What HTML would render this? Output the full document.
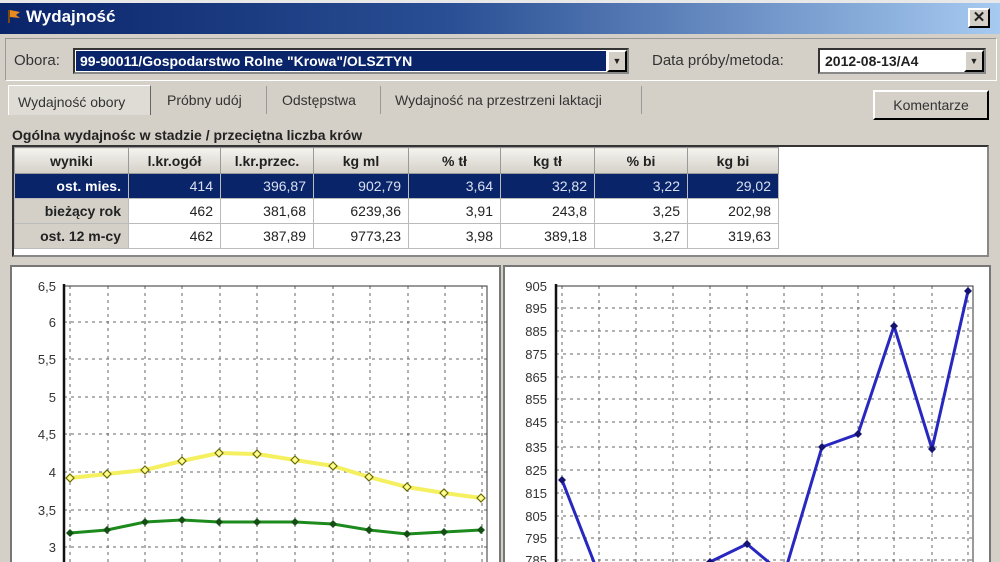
<!DOCTYPE html>
<html><head><meta charset="utf-8">
<style>
*{margin:0;padding:0;box-sizing:border-box}
body{width:1000px;height:562px;overflow:hidden;background:#d4d0c8;font-family:"Liberation Sans",sans-serif;font-size:13px;color:#222;position:relative}
.a{position:absolute}
.title{left:0;top:0;width:1000px;height:34px;background:linear-gradient(90deg,#0a246a 0%,#2a4f94 45%,#a6caf0 100%);border-top:3px solid #e8e8e8}
.combo{background:#fff;border:2px inset #888}
.btn{background:#d4d0c8;border:2px outset #fff;border-right-color:#555;border-bottom-color:#555}
table{border-collapse:collapse;font-size:14px}
td{height:25px;border:1px solid #bbb;padding:0 7px;text-align:right}
th{height:26px;background:linear-gradient(#f4f3ee,#d4d0c8);border:1px solid #999;font-weight:bold;text-align:center}
td.h{background:#d4d0c8;font-weight:bold}
tr.sel td{background:#0a246a;color:#d8e0f0}
tr.sel td.h{font-weight:bold;color:#fff}
</style></head><body>
<div class="a title"></div>
<div class="a" style="left:6px;top:8px;width:16px;height:16px"><svg width="16" height="16"><path d="M3 2 L3 15" stroke="#7a4a10" stroke-width="2"/><path d="M4 2 L14 4 L10 7 L14 10 L4 9Z" fill="#e88a20"/></svg></div>
<div class="a" style="left:26px;top:7px;color:#fff;font-weight:bold;font-size:17px">Wydajność</div>
<div class="a btn" style="left:968px;top:8px;width:22px;height:20px;font-weight:bold;font-size:15px;line-height:15px;text-align:center">✕</div>

<div class="a" style="left:5px;top:38px;width:992px;height:43px;border:1px solid #fff;border-top-color:#999;border-left-color:#999"></div>
<div class="a" style="left:14px;top:52px;font-size:15px;color:#333">Obora:</div>
<div class="a combo" style="left:73px;top:48px;width:556px;height:26px"><div style="position:absolute;left:1px;top:1px;width:530px;height:20px;background:#0a246a;color:#fff;font-weight:bold;font-size:14px;padding-left:4px;line-height:20px">99-90011/Gospodarstwo Rolne "Krowa"/OLSZTYN</div><div class="btn" style="position:absolute;right:0;top:0;width:20px;height:22px;font-size:9px;text-align:center;line-height:18px">▼</div></div>
<div class="a" style="left:652px;top:52px;font-size:15px;color:#333">Data próby/metoda:</div>
<div class="a combo" style="left:818px;top:48px;width:168px;height:26px"><div style="position:absolute;left:5px;top:3px;font-weight:bold;font-size:14px">2012-08-13/A4</div><div class="btn" style="position:absolute;right:0;top:0;width:20px;height:22px;font-size:9px;text-align:center;line-height:18px">▼</div></div>

<div class="a" style="left:8px;top:85px;width:143px;height:30px;background:#dfdcd5;border:1px solid #fff;border-right-color:#666;border-bottom:none;font-size:14px;padding:8px 0 0 9px;color:#333">Wydajność obory</div>
<div class="a" style="left:167px;top:92px;font-size:14px;color:#333">Próbny udój</div>
<div class="a" style="left:266px;top:86px;height:28px;border-left:1px solid #999"></div>
<div class="a" style="left:282px;top:92px;font-size:14px;color:#333">Odstępstwa</div>
<div class="a" style="left:380px;top:86px;height:28px;border-left:1px solid #999"></div>
<div class="a" style="left:395px;top:92px;font-size:14px;color:#333">Wydajność na przestrzeni laktacji</div>
<div class="a" style="left:641px;top:86px;height:28px;border-left:1px solid #999"></div>
<div class="a btn" style="left:873px;top:90px;width:116px;height:30px;font-size:14px;text-align:center;line-height:26px;color:#333">Komentarze</div>

<div class="a" style="left:12px;top:127px;font-weight:bold;font-size:14px">Ogólna wydajnośc w stadzie / przeciętna liczba krów</div>
<div class="a" style="left:12px;top:145px;width:977px;height:112px;background:#fff;border:2px inset #888"></div>
<table class="a" style="left:14px;top:147px">
<tr><th style="width:114px">wyniki</th><th style="width:92px">l.kr.ogół</th><th style="width:93px">l.kr.przec.</th><th style="width:95px">kg ml</th><th style="width:92px">% tł</th><th style="width:94px">kg tł</th><th style="width:93px">% bi</th><th style="width:91px">kg bi</th></tr>
<tr class="sel"><td class="h">ost. mies.</td><td>414</td><td>396,87</td><td>902,79</td><td>3,64</td><td>32,82</td><td>3,22</td><td>29,02</td></tr>
<tr><td class="h">bieżący rok</td><td>462</td><td>381,68</td><td>6239,36</td><td>3,91</td><td>243,8</td><td>3,25</td><td>202,98</td></tr>
<tr><td class="h">ost. 12 m-cy</td><td>462</td><td>387,89</td><td>9773,23</td><td>3,98</td><td>389,18</td><td>3,27</td><td>319,63</td></tr>
</table>

<svg class="a" style="left:0;top:0" width="1000" height="562" font-family="Liberation Sans,sans-serif" font-size="13" fill="#333">
<rect x="11" y="266" width="489" height="300" fill="#fff" stroke="#777" stroke-width="2"/>
<rect x="504" y="266" width="486" height="300" fill="#fff" stroke="#777" stroke-width="2"/>
<g stroke="#666" stroke-dasharray="3,4" stroke-width="1">
<path d="M64 322H487M64 359H487M64 397H487M64 434H487M64 472H487M64 510H487M64 547H487"/>
<path d="M70 286V562M108 286V562M145 286V562M182 286V562M220 286V562M257 286V562M295 286V562M333 286V562M370 286V562M408 286V562M445 286V562M482 286V562"/>
<path d="M556 308H973M556 331H973M556 354H973M556 377H973M556 399H973M556 422H973M556 447H973M556 470H973M556 493H973M556 516H973M556 538H973M556 560H973"/>
<path d="M562 286V562M599 286V562M636 286V562M673 286V562M710 286V562M747 286V562M784 286V562M822 286V562M858 286V562M894 286V562M932 286V562M968 286V562"/>
</g>
<path d="M64 286H487V562M556 286H973V562" stroke="#333" fill="none"/>
<path d="M64 284V562M556 284V562" stroke="#111" stroke-width="2.5"/>
<g text-anchor="end">
<text x="56" y="291">6,5</text><text x="56" y="327">6</text><text x="56" y="364">5,5</text><text x="56" y="402">5</text><text x="56" y="439">4,5</text><text x="56" y="477">4</text><text x="56" y="515">3,5</text><text x="56" y="552">3</text>
<text x="547" y="291">905</text><text x="547" y="313">895</text><text x="547" y="336">885</text><text x="547" y="359">875</text><text x="547" y="382">865</text><text x="547" y="404">855</text><text x="547" y="427">845</text><text x="547" y="452">835</text><text x="547" y="475">825</text><text x="547" y="498">815</text><text x="547" y="521">805</text><text x="547" y="543">795</text><text x="547" y="565">785</text>
</g>
<polyline points="70,478 107,474 145,470 182,461 219,453 257,454 295,460 333,466 369,477 407,487 444,493 481,498" fill="none" stroke="#f4f060" stroke-width="4"/>
<g fill="#ffff90" stroke="#6a6a00" stroke-width="1.2">
<path d="M70 474l4 4-4 4-4-4zM107 470l4 4-4 4-4-4zM145 466l4 4-4 4-4-4zM182 457l4 4-4 4-4-4zM219 449l4 4-4 4-4-4zM257 450l4 4-4 4-4-4zM295 456l4 4-4 4-4-4zM333 462l4 4-4 4-4-4zM369 473l4 4-4 4-4-4zM407 483l4 4-4 4-4-4zM444 489l4 4-4 4-4-4zM481 494l4 4-4 4-4-4z"/></g>
<polyline points="70,533 107,530 145,522 182,520 219,522 257,522 295,522 333,524 369,530 407,534 444,532 481,530" fill="none" stroke="#1d8a1d" stroke-width="3"/>
<g fill="#145014"><path d="M70 529l4 4-4 4-4-4zM107 526l4 4-4 4-4-4zM145 518l4 4-4 4-4-4zM182 516l4 4-4 4-4-4zM219 518l4 4-4 4-4-4zM257 518l4 4-4 4-4-4zM295 518l4 4-4 4-4-4zM333 520l4 4-4 4-4-4zM369 526l4 4-4 4-4-4zM407 530l4 4-4 4-4-4zM444 528l4 4-4 4-4-4zM481 526l4 4-4 4-4-4z"/></g>
<polyline points="562,480 599,575 636,590 673,585 710,562 747,544 784,575 822,447 858,434 894,326 932,449 968,291" fill="none" stroke="#2828c0" stroke-width="3"/>
<g fill="#141470"><path d="M562 476l4 4-4 4-4-4zM710 558l4 4-4 4-4-4zM747 540l4 4-4 4-4-4zM822 443l4 4-4 4-4-4zM858 430l4 4-4 4-4-4zM894 322l4 4-4 4-4-4zM932 445l4 4-4 4-4-4zM968 287l4 4-4 4-4-4z"/></g>
</svg>
</body></html>
